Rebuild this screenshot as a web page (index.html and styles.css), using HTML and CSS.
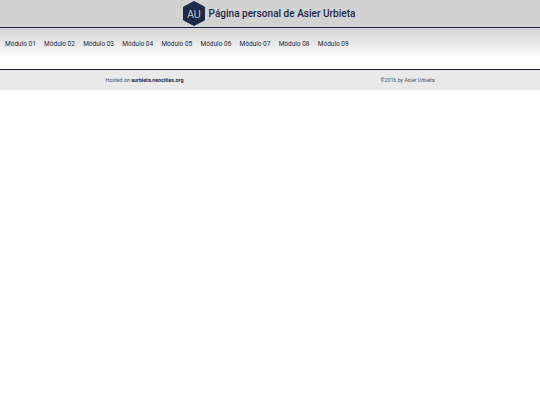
FILE: index.html
```html
<!DOCTYPE html>
<html lang="es">
<head>
    <meta charset="UTF-8">
    <meta name="viewport" content="width=device-width, initial-scale=1.0">
    <title>Página personal de Asier Urbieta</title>
    <link rel="stylesheet" href="styles.css">
</head>
<body>
    <header class="site-header">
        <svg class="logo" viewBox="0 0 22 25" width="22" height="25">
            <path d="M11 0.5 L21.5 6 V19 L11 24.5 L0.5 19 V6 Z" fill="#1c2b47" stroke="#1c2b47" stroke-linejoin="round"/>
            <text x="11" y="16.5" text-anchor="middle" class="logo-text">AU</text>
        </svg>
        <h1>Página personal de Asier Urbieta</h1>
    </header>
    <nav class="modules">
        <a href="#">Módulo 01</a>
        <a href="#">Módulo 02</a>
        <a href="#">Módulo 03</a>
        <a href="#">Módulo 04</a>
        <a href="#">Módulo 05</a>
        <a href="#">Módulo 06</a>
        <a href="#">Módulo 07</a>
        <a href="#">Módulo 08</a>
        <a href="#">Módulo 09</a>
    </nav>
    <footer class="site-footer">
        <div class="foot-col">Hosted on <a href="#">aurbieta.neocities.org</a></div>
        <div class="foot-col">©2016 by Asier Urbieta</div>
    </footer>
</body>
</html>
```

FILE: styles.css
```css
body {
    margin: 0;
    font-family: Roboto, "Liberation Sans", sans-serif;
    background-color: #fff;
    color: #1c2b47;
}
.site-header {
    display: flex;
    align-items: center;
    justify-content: center;
    gap: 4px;
    height: 27px;
    padding-right: 2px;
    background-color: #d2d2d2;
    border-bottom: 1px solid #1c2440;
}
.logo {
    display: block;
}
.logo-text {
    font-family: Roboto, "Liberation Sans", sans-serif;
    font-size: 10.5px;
    font-weight: 300;
    fill: #fff;
}
h1 {
    margin: 0;
    font-size: 10.05px;
    font-weight: 500;
    color: #1c2b47;
}
.modules {
    display: flex;
    gap: 8.25px;
    height: 41px;
    padding: 0 5px;
    align-items: flex-start;
    background: linear-gradient(#d2d2d2, #fff 75%);
    border-bottom: 1px solid #1c2440;
}
.modules a {
    margin-top: 12px;
    font-size: 6.5px;
    line-height: 8px;
    color: #1c2b47;
    text-decoration: none;
}
.site-footer {
    display: grid;
    grid-template-columns: 263px 263px;
    height: 20px;
    padding-left: 13px;
    align-items: center;
    background-color: #e9e9e9;
    font-size: 5.3px;
    color: #4a5364;
    text-align: center;
}
.site-footer a {
    font-weight: 700;
    color: #1c2b47;
    text-decoration: none;
}
```
